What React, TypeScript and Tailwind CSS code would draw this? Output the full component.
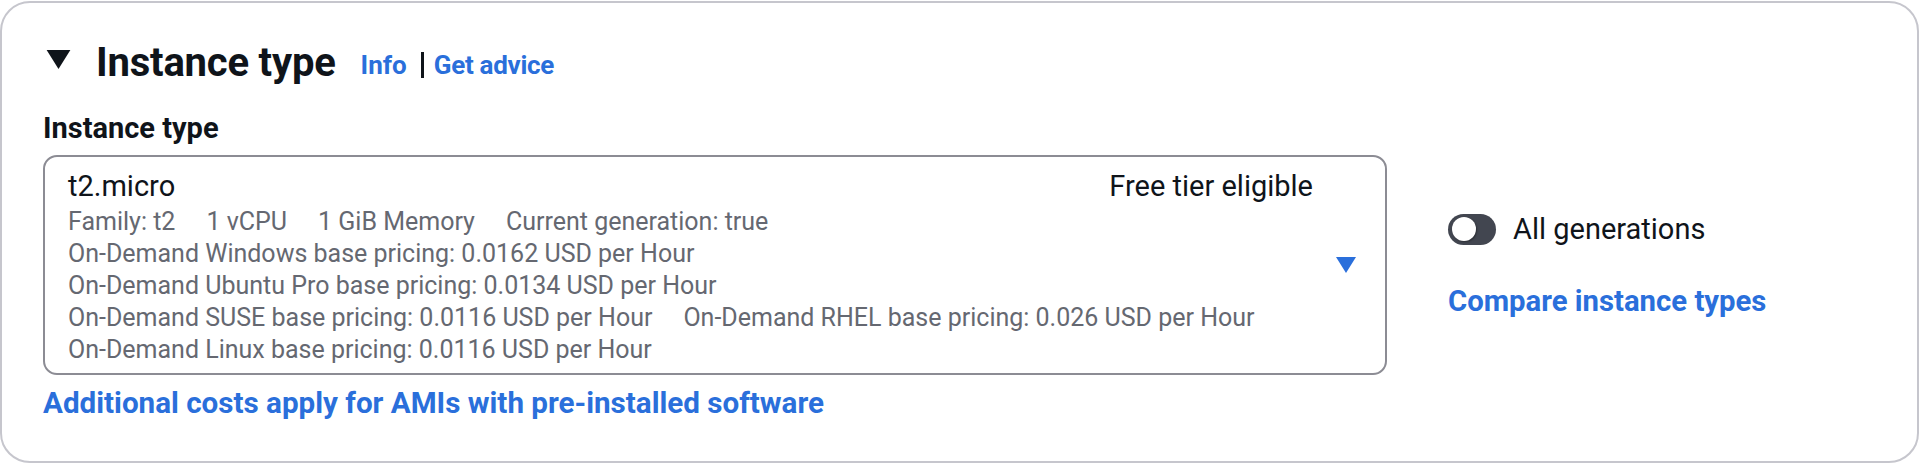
import React from "react";

function Caret({ className, color }: { className: string; color: string }) {
  return (
    <svg className={className} viewBox="0 0 20 16" aria-hidden="true">
      <polygon points="0,0 20,0 10,16" fill={color} />
    </svg>
  );
}

const secondary = [
  ["Family: t2", "1 vCPU", "1 GiB Memory", "Current generation: true"],
  ["On-Demand Windows base pricing: 0.0162 USD per Hour"],
  ["On-Demand Ubuntu Pro base pricing: 0.0134 USD per Hour"],
  [
    "On-Demand SUSE base pricing: 0.0116 USD per Hour",
    "On-Demand RHEL base pricing: 0.026 USD per Hour",
  ],
  ["On-Demand Linux base pricing: 0.0116 USD per Hour"],
];

export default function App() {
  return (
    <div className="w-[1919px] h-[465px] bg-white pt-px font-[family-name:Roboto,'Liberation_Sans',sans-serif] text-[#0f141a]">
      <div className="h-[462px] rounded-[30px] border-2 border-[#c6c6cd] pl-[41px] pt-[32px]">
        {/* Header */}
        <div className="flex items-center h-[48px]">
          <Caret className="ml-[3px] w-[25px] h-[19px]" color="#0f141a" />
          <h2 className="ml-[25px] pt-[8px] text-[40px] leading-[48px] font-bold tracking-[-0.2px]">
            Instance type
          </h2>
          <div className="ml-[25px] flex items-center text-[26px] font-bold leading-[36px] mt-[11px]">
            <span className="text-[#2a6fdb]">Info</span>
            <span className="ml-[14px] w-[3px] h-[26px] bg-[#0f141a]" />
            <span className="ml-[10px] text-[#2a6fdb] tracking-[-0.3px]">Get advice</span>
          </div>
        </div>

        {/* Label */}
        <div className="mt-[27px] text-[29px] leading-[36px] font-bold">Instance type</div>

        {/* Select + right column */}
        <div className="mt-[9px] flex items-center">
          <div className="w-[1344px] h-[220px] rounded-[14px] border-2 border-[#8c8c94] flex">
            <div className="flex-1 pl-[23px] pt-[9px]">
              <div className="flex justify-between items-center h-[40px] text-[29px] leading-[40px]">
                <span>t2.micro</span>
                <span>Free tier eligible</span>
              </div>
              <div className="text-[25px] leading-[32px] text-[#656871]">
                {secondary.map((row, i) => (
                  <div key={i} className="flex gap-[31px] whitespace-nowrap">
                    {row.map((t, j) => (
                      <span key={j}>{t}</span>
                    ))}
                  </div>
                ))}
              </div>
            </div>
            <div className="pl-[23px] pr-[29px] flex items-center">
              <Caret className="w-[20px] h-[16px]" color="#2a6fdb" />
            </div>
          </div>

          <div className="ml-[61px] flex flex-col gap-[36px]">
            <div className="flex items-center h-[36px]">
              <div className="w-[48px] h-[31px] rounded-full bg-[#424650] flex items-center pl-[4px]">
                <div className="w-[24px] h-[24px] rounded-full bg-white shadow-[1px_1px_2px_rgba(0,0,0,0.35)]" />
              </div>
              <span className="ml-[17px] text-[29px] leading-[36px]">All generations</span>
            </div>
            <div className="text-[29.3px] leading-[36px] font-bold text-[#2a6fdb]">
              Compare instance types
            </div>
          </div>
        </div>

        {/* Footer link */}
        <div className="mt-[10px] text-[29.6px] leading-[36px] font-bold text-[#2a6fdb]">
          Additional costs apply for AMIs with pre-installed software
        </div>
      </div>
    </div>
  );
}
